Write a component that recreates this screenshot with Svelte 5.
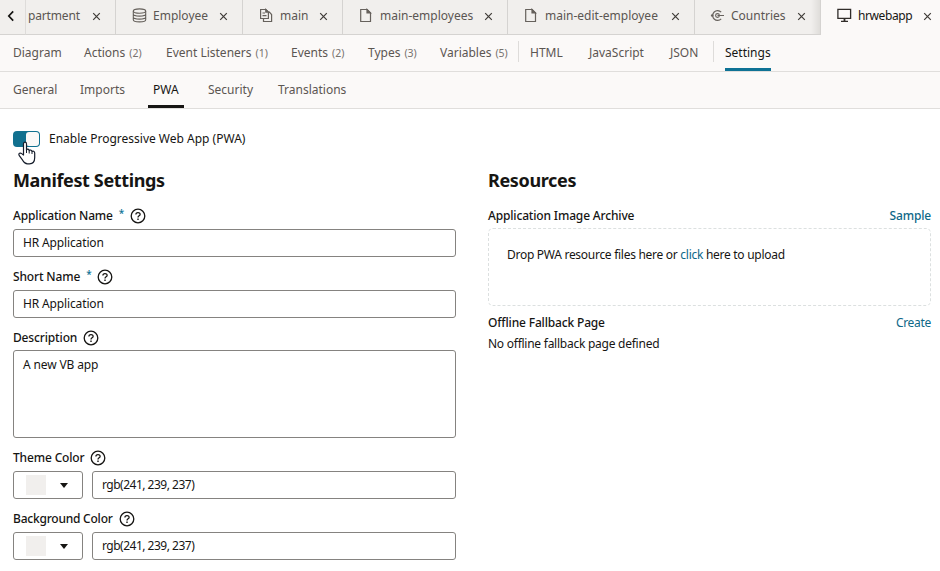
<script>
  const tabs = [
    { label: 'partment', icon: '', start: 2, gap: 0, text: 53, width: 90 },
    { label: 'Employee', icon: 'data', start: 16, gap: 6, text: 55, width: 127 },
    { label: 'main', icon: 'flow', start: 16, gap: 6, text: 28, width: 100 },
    { label: 'main-employees', icon: 'page', start: 16, gap: 6, text: 94, width: 165 },
    { label: 'main-edit-employee', icon: 'page', start: 16, gap: 6, text: 115, width: 187 },
    { label: 'Countries', icon: 'service', start: 15, gap: 6, text: 55, width: 126 },
    { label: 'hrwebapp', icon: 'app', start: 16, gap: 6, text: 54, width: 120, active: true },
  ];
  const sections = [
    { label: 'Diagram', width: 71 },
    { label: 'Actions', count: 2, width: 82 },
    { label: 'Event Listeners', count: 1, width: 125 },
    { label: 'Events', count: 2, width: 77 },
    { label: 'Types', count: 3, width: 72 },
    { label: 'Variables', count: 5, width: 78 },
    { label: 'HTML', width: 59, divided: true },
    { label: 'JavaScript', width: 81 },
    { label: 'JSON', width: 43 },
    { label: 'Settings', width: 58, divided: true, active: true },
  ];
  const pages = [
    { label: 'General', width: 67 },
    { label: 'Imports', width: 73 },
    { label: 'PWA', width: 55, active: true },
    { label: 'Security', width: 70 },
    { label: 'Translations', width: 80 },
  ];
  let appName = $state('HR Application');
  let shortName = $state('HR Application');
  let description = $state('A new VB app');
  let colors = $state([
    { label: 'Theme Color', cls: 'theme', value: 'rgb(241, 239, 237)' },
    { label: 'Background Color', cls: 'background', value: 'rgb(241, 239, 237)' },
  ]);
</script>

{#snippet help()}
  <svg class="help" width="16" height="16" viewBox="0 0 16 16" fill="none" stroke="#161513">
    <circle cx="8" cy="8" r="6.8" stroke-width="1.3" />
    <path d="M5.9 6.6C5.9 4 10.1 4 10.1 6.4C10.1 7.8 8 7.8 8 9.4" stroke-width="1.3" />
    <path d="M8 10.6V12" stroke-width="1.4" />
  </svg>
{/snippet}

{#snippet tabIcon(name)}
  {#if name === 'data'}
    <svg width="15" height="15" viewBox="0 0 15 15" fill="none" stroke="#66615c" stroke-width="1.1">
      <ellipse cx="7.5" cy="3.1" rx="6.2" ry="2.2" />
      <path d="M1.3 3V11.8C1.3 14.6 13.7 14.6 13.7 11.8V3M1.3 6.1C1.3 8.8 13.7 8.8 13.7 6.1M1.3 9.1C1.3 11.8 13.7 11.8 13.7 9.1" />
    </svg>
  {:else if name === 'flow'}
    <svg width="15" height="15" viewBox="0 0 15 15" fill="none" stroke="#66615c" stroke-width="1.2">
      <path d="M1.6 1.5H6.8L9.4 4.1V10.5H1.6Z M3.5 5H6M3.5 7.7H7.5M10 3.7L12.6 6.5V13.5H4.5V11" />
      <path d="M6.8 1.5V4.1H9.4Z" fill="#66615c" />
    </svg>
  {:else if name === 'page'}
    <svg width="15" height="15" viewBox="0 0 15 15" fill="none" stroke="#66615c" stroke-width="1.2">
      <path d="M1.7 1.5H8L11.5 5V13.5H1.7Z" />
      <path d="M8 1.5V5H11.5Z" fill="#66615c" />
    </svg>
  {:else if name === 'service'}
    <svg width="15" height="15" viewBox="0 0 15 15" fill="none" stroke="#66615c" stroke-width="1.1">
      <path d="M11.2 4.2A4.9 4.9 0 1 0 11.2 10.8M7.5 7.5H14" />
      <circle cx="7.5" cy="7.5" r="1.9" />
      <circle cx="2.2" cy="7.5" r="1.3" fill="#66615c" stroke="none" />
    </svg>
  {:else}
    <svg width="15" height="15" viewBox="0 0 15 15" fill="none" stroke="#312d2a" stroke-width="1.3">
      <path d="M.9 1.4H13.6V10.4H.9Z M4 13.3H11" />
      <path d="M7.5 10.5V13" stroke-width="1.8" />
    </svg>
  {/if}
{/snippet}

<main>
  <header class="tabs">
    <button class="back" aria-label="Scroll back">
      <svg width="8" height="12" viewBox="0 0 8 12" fill="none" stroke="#161513" stroke-width="1.7"><path d="M6.2 1.4L1.8 6L6.2 10.6" /></svg>
    </button>
    {#each tabs as tab}
      <div class="tab" class:active={tab.active} style:width="{tab.width}px" style:padding-left="{tab.start}px">
        {#if tab.icon}{@render tabIcon(tab.icon)}{/if}
        <span class="name" style:width="{tab.text}px" style:margin-left="{tab.gap}px">{tab.label}</span>
        <svg class="close" width="9" height="9" viewBox="0 0 9 9" stroke="#3f3b37" stroke-width="1.2"><path d="M1.2 1.2L7.8 7.8M7.8 1.2L1.2 7.8" /></svg>
      </div>
    {/each}
  </header>

  <nav class="sections">
    {#each sections as s}
      {#if s.divided}<i class="divider"></i>{/if}
      <span class="item" class:active={s.active} style:width="{s.width}px">
        <span class="label">{s.label}{#if s.count}<small>({s.count})</small>{/if}</span>
      </span>
    {/each}
  </nav>

  <nav class="pages">
    {#each pages as p}
      <span class="item" class:active={p.active} style:width="{p.width}px"><span class="label">{p.label}</span></span>
    {/each}
  </nav>

  <div class="enable">
    <span class="switch">
      <i class="thumb"></i>
      <svg class="pointer" width="18" height="24" viewBox="0 0 18 24" fill="#fff" stroke="#161d2b" stroke-width="1.2" stroke-linejoin="round">
        <path d="M5.5 14V3C5.5 .5 8.5 .5 8.5 3V9.2C8.8 7.7 11 7.8 11.2 9.7C11.8 8.5 13.8 8.9 14 10.5C14.8 9.6 16.7 10.2 16.7 12V16.5C16.7 20.6 14.4 22.8 11.5 22.8H9.5C7 22.8 5.8 21.3 4.6 19.2L1.3 14.7C0 12.4 2.3 11.4 3.7 12.6Z" />
        <path d="M8.5 9V12M11.2 9.7V12.5M14 10.5V13" fill="none" stroke-width="1" />
      </svg>
    </span>
    <span class="enable-label">Enable Progressive Web App (PWA)</span>
  </div>

  <div class="columns">
    <section class="manifest">
      <h2>Manifest Settings</h2>
      <div class="label-row"><span class="app">Application Name</span><sup>*</sup>{@render help()}</div>
      <input bind:value={appName} aria-label="Application Name" />
      <div class="label-row"><span class="short">Short Name</span><sup>*</sup>{@render help()}</div>
      <input bind:value={shortName} aria-label="Short Name" />
      <div class="label-row"><span class="desc">Description</span>{@render help()}</div>
      <textarea bind:value={description} aria-label="Description"></textarea>
      {#each colors as c}
        <div class="label-row"><span class={c.cls}>{c.label}</span>{@render help()}</div>
        <div class="color-row">
          <button class="picker" aria-label={c.label}>
            <i class="swatch" style:background={c.value}></i>
            <i class="caret"></i>
          </button>
          <input class="rgb" bind:value={c.value} aria-label={c.label} />
        </div>
      {/each}
    </section>

    <section class="resources">
      <h2>Resources</h2>
      <div class="link-row"><span class="archive">Application Image Archive</span><span class="link strong">Sample</span></div>
      <div class="drop">Drop PWA resource files here or <span class="link">click</span> here to upload</div>
      <div class="link-row offline"><span class="fallback">Offline Fallback Page</span><span class="link create">Create</span></div>
      <p>No offline fallback page defined</p>
    </section>
  </div>
</main>

<style>
  :global(body) { background: #fff; overflow: hidden; }
  main, input, textarea, button { font-family: "Noto Sans", "Open Sans", sans-serif; font-size: 12px; color: #161513; }
  main { width: 940px; height: 571px; overflow: hidden; line-height: 16px; white-space: nowrap; }
  main * { box-sizing: border-box; }
  svg { display: block; flex: none; }
  button { padding: 0; }

  .tabs { display: flex; height: 35px; background: #f1efed; }
  .back { width: 26px; height: 35px; flex: none; display: flex; align-items: center; padding: 0 0 3px 7px; border: 0; border-right: 1px solid #dedcda; border-bottom: 1px solid #d5d3d1; background: #f1efed; }
  .tab { display: flex; flex: none; align-items: center; padding: 0 14px 4px 0; border-right: 1px solid #d5d3d1; border-bottom: 1px solid #d5d3d1; color: #5b5652; }
  .tab:nth-child(2) .name { letter-spacing: -.15px; }
  .tab:nth-child(7) { background: linear-gradient(to left, #dfddda, #f1efed 9px); }
  .tab.active { background: #fbf9f8; border-color: #fbf9f8; color: #161513; }
  .name { flex: none; padding-top: 1px; }
  .tab.active .name { letter-spacing: -.4px; }
  .close { margin-left: auto; position: relative; top: 1px; }
  .tab.active .close { margin-right: -6px; }

  nav { display: flex; padding-left: 13px; background: #fbf9f8; border-bottom: 1px solid #e0dedc; color: #5b5652; }
  .sections { height: 37px; }
  .pages { height: 37px; }
  .item { flex: none; height: 36px; display: flex; }
  .label { display: block; padding-top: 10px; height: 36px; }
  small { font-size: 10.5px; color: #77726e; margin-left: 4px; }
  .item.active { color: #161513; }
  .sections .active .label { border-bottom: 3px solid #0e7295; }
  .pages .active .label { border-bottom: 3px solid #161513; margin: 0 -5px; padding-left: 5px; padding-right: 5px; }
  .divider { flex: none; width: 1px; height: 21px; margin: 6px 11px 0 0; background: #dedcda; }

  .enable { display: flex; align-items: center; height: 16px; margin: 22px 0 0 13px; }
  .switch { position: relative; width: 27px; height: 16px; border-radius: 4px; background: #11708f; display: flex; justify-content: flex-end; padding: 1px; }
  .thumb { width: 13px; height: 14px; background: #fbf9f8; border-radius: 3px; }
  .pointer { position: absolute; left: 5px; top: 10px; }
  .enable-label { margin-left: 9px; }

  .columns { display: flex; padding-left: 13px; margin-top: 21px; }
  .manifest { width: 443px; margin-right: 32px; }
  .resources { width: 443px; }
  h2 { margin: 0; height: 24px; line-height: 24px; font-size: 18px; font-weight: 700; letter-spacing: -.36px; }
  .label-row { display: flex; align-items: center; height: 16px; margin-top: 12px; font-weight: 500; letter-spacing: -.15px; }
  h2 + .label-row { margin-top: 16px; }
  .background { letter-spacing: -.22px; }
  sup { width: 5px; margin-left: 6px; font-size: 10px; line-height: 10px; height: 17px; color: #0e7295; }
  .help { margin-left: 6px; }
  input, textarea { display: block; width: 443px; height: 28px; margin: 5px 0 0; padding: 0 9px 1px; border: 1px solid #858380; border-radius: 3px; background: #fff; outline: 0; resize: none; letter-spacing: -.14px; }
  textarea { height: 88px; margin-top: 4px; padding: 6px 9px; line-height: 16px; }
  .color-row { display: flex; margin-top: 5px; }
  .picker { width: 70px; height: 28px; margin-right: 9px; padding-left: 12px; display: flex; align-items: center; border: 1px solid #858380; border-radius: 3px; background: #fff; }
  .swatch { width: 20px; height: 20px; }
  .caret { margin-left: 14px; border: 4px solid transparent; border-top: 5px solid #161513; border-bottom: 0; }
  .rgb { width: 364px; margin: 0; letter-spacing: -.5px; }
  .link { color: #0e6888; }
  .link-row { display: flex; justify-content: space-between; margin-top: 16px; font-weight: 500; letter-spacing: -.16px; }
  .drop { height: 78px; margin-top: 4px; padding: 18px; border: 1px dashed #dce0e0; border-radius: 5px; letter-spacing: -.28px; }
  .link-row.offline { margin-top: 9px; }
  .create { font-weight: 400; letter-spacing: -.3px; }
  p { margin: 5px 0 0; letter-spacing: -.25px; }
</style>
